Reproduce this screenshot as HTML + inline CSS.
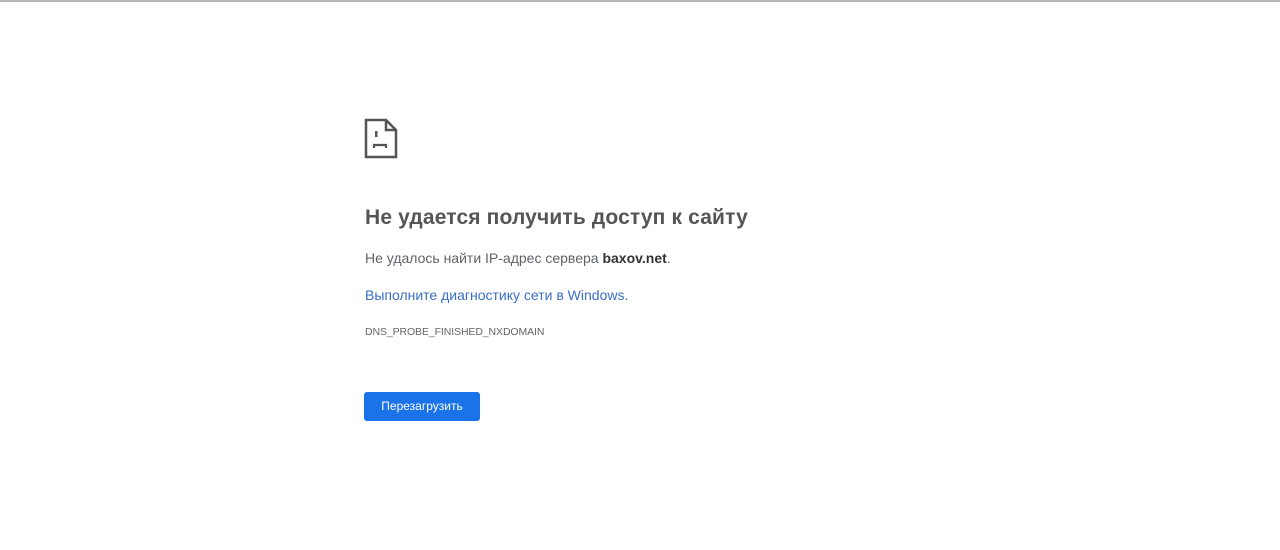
<!DOCTYPE html>
<html><head><meta charset="utf-8"><style>
html,body{margin:0;padding:0;background:#fff;width:1280px;height:550px;overflow:hidden;font-family:"Liberation Sans",sans-serif;}
.top{position:absolute;left:0;top:0;width:1280px;height:2px;background:#b8b8b8;}
.abs{position:absolute;white-space:nowrap;}
h1{position:absolute;left:365px;top:206px;margin:0;font-size:21px;font-weight:bold;color:#555;letter-spacing:0.15px;}
.p1{left:365px;top:250px;font-size:14px;color:#5f6368;}
.p1 b{color:#333;}
.p2{left:365px;top:287px;font-size:14px;color:#3a6fc4;}
.p3{left:365px;top:326px;font-size:10.5px;color:#666;letter-spacing:-0.1px;}
.btn{position:absolute;left:364px;top:392px;width:116px;height:29px;background:#1a73e8;border-radius:3px;color:#fff;font-size:12px;line-height:29px;text-align:center;}
</style></head><body>
<div class="top"></div>
<svg class="abs" style="left:362px;top:117px" width="38" height="44" viewBox="0 0 38 44">
<path d="M4 3 H24 L34 13 V40 H4 Z" fill="none" stroke="#555" stroke-width="2.5"/>
<path d="M24 3 V13 H34" fill="none" stroke="#555" stroke-width="2.5"/>
<rect x="13" y="14" width="2.5" height="6" fill="#555"/>
<path d="M12 31 V28 H24 V31" fill="none" stroke="#555" stroke-width="2.2"/>
</svg>
<h1>Не удается получить доступ к сайту</h1>
<div class="abs p1">Не удалось найти IP-адрес сервера <b>baxov.net</b>.</div>
<div class="abs p2">Выполните диагностику сети в Windows.</div>
<div class="abs p3">DNS_PROBE_FINISHED_NXDOMAIN</div>
<div class="btn">Перезагрузить</div>
</body></html>
